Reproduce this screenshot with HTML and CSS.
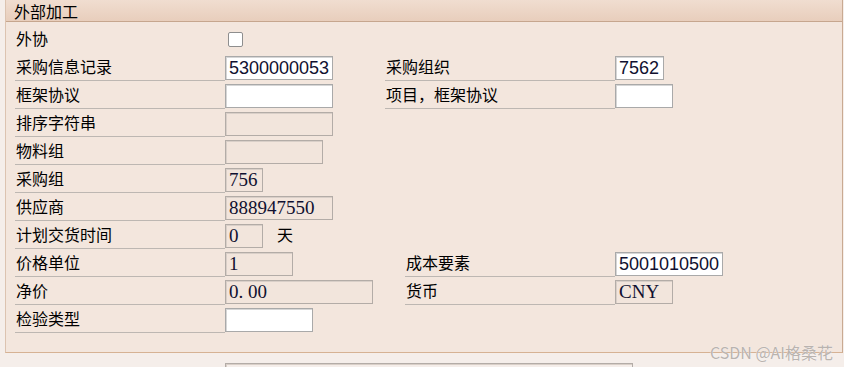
FILE: index.html
```html
<!DOCTYPE html>
<html lang="zh-CN">
<head>
  <meta charset="UTF-8">
  <title>外部加工</title>
  <link rel="stylesheet" href="styles.css">
</head>
<body>
  <div class="panel">
    <div class="panel-head">外部加工</div>
    <div class="panel-body">
      <div class="row">
        <div class="lbl none">外协</div>
        <div class="slot"><input type="checkbox" class="chk"></div>
      </div>
      <div class="row">
        <div class="lbl">采购信息记录</div>
        <div class="slot"><div class="fld w108">5300000053</div></div>
        <div class="lbl lbl2">采购组织</div>
        <div class="fld w49">7562</div>
      </div>
      <div class="row">
        <div class="lbl">框架协议</div>
        <div class="slot"><div class="fld w108"></div></div>
        <div class="lbl lbl2">项目，框架协议</div>
        <div class="fld w58"></div>
      </div>
      <div class="row">
        <div class="lbl">排序字符串</div>
        <div class="slot"><div class="fld ro w108"></div></div>
      </div>
      <div class="row">
        <div class="lbl">物料组</div>
        <div class="slot"><div class="fld ro w98"></div></div>
      </div>
      <div class="row">
        <div class="lbl">采购组</div>
        <div class="slot"><div class="fld ro w38">756</div></div>
      </div>
      <div class="row">
        <div class="lbl">供应商</div>
        <div class="slot"><div class="fld ro w108">888947550</div></div>
      </div>
      <div class="row">
        <div class="lbl">计划交货时间</div>
        <div class="slot"><div class="fld ro w38">0</div><span class="unit">天</span></div>
      </div>
      <div class="row">
        <div class="lbl">价格单位</div>
        <div class="slot"><div class="fld ro w68">1</div></div>
        <div class="lbl lbl2 indent">成本要素</div>
        <div class="fld w108">5001010500</div>
      </div>
      <div class="row">
        <div class="lbl">净价</div>
        <div class="slot"><div class="fld ro w148">0. 00</div></div>
        <div class="lbl lbl2 indent">货币</div>
        <div class="fld ro w58">CNY</div>
      </div>
      <div class="row">
        <div class="lbl">检验类型</div>
        <div class="slot"><div class="fld w88"></div></div>
      </div>
    </div>
  </div>

  <div class="after">
    <div class="fld ro wide"></div>
  </div>

  <div class="mark">CSDN @AI格桑花</div>
</body>
</html>
```

FILE: styles.css
```css
html {
  overflow: hidden;
}
body {
  margin: 0;
  background: #f5eeea;
  font-family: "Noto Sans CJK SC", sans-serif;
  font-size: 16px;
  color: #000;
  position: relative;
  height: 367px;
  overflow: hidden;
}
.panel {
  margin-left: 5px;
  width: 838px;
  box-sizing: border-box;
  background: #f3e6dd;
  border-left: 1px solid #dcc3b0;
  border-right: 1px solid #c9aa92;
  border-bottom: 1px solid #d6b294;
}
.panel-head {
  height: 22px;
  box-sizing: border-box;
  border-bottom: 1px solid #c6a68e;
  background: linear-gradient(#f0ddd0, #e8cebc);
  padding-left: 8px;
  line-height: 23px;
}
.panel-body {
  padding: 3px 0 19px 9px;
}
.row {
  display: flex;
  height: 28px;
  align-items: flex-end;
}
.lbl {
  width: 210px;
  height: 28px;
  box-sizing: border-box;
  border-bottom: 1px solid #bdb7b2;
  padding-left: 1px;
  line-height: 27px;
  white-space: nowrap;
}
.lbl.none {
  border-bottom-color: transparent;
}
.lbl2 {
  width: 230px;
}
.lbl2.indent {
  margin-left: 20px;
  width: 210px;
}
.slot {
  width: 160px;
  height: 28px;
  display: flex;
  align-items: flex-end;
}
.fld {
  height: 24px;
  margin-bottom: 1px;
  box-sizing: border-box;
  border: 1px solid #a9a9a9;
  box-shadow: inset 1px 1px 0 #d6d6d6;
  background: #fff;
  font-family: "Liberation Sans", sans-serif;
  font-size: 18px;
  line-height: 22px;
  padding-left: 3px;
  color: #101030;
  white-space: nowrap;
  overflow: hidden;
}
.fld.ro {
  background: #f2e5dc;
  border-color: #b3aca7;
  box-shadow: inset 1px 1px 0 #d9cfc8;
  font-family: "Liberation Serif", serif;
  font-size: 19px;
}
.w38 { width: 38px; }
.w49 { width: 49px; }
.w58 { width: 58px; }
.w68 { width: 68px; }
.w88 { width: 88px; }
.w98 { width: 98px; }
.w108 { width: 108px; }
.w148 { width: 148px; }
.chk {
  appearance: none;
  -webkit-appearance: none;
  width: 15px;
  height: 15px;
  margin: 0 0 6px 3px;
  box-sizing: border-box;
  border: 1px solid #8e8e8e;
  border-radius: 2px;
  background: #fff;
}
.unit {
  margin-left: 14px;
  line-height: 27px;
  align-self: flex-start;
}
.after {
  margin-top: 10px;
  padding-left: 225px;
  height: 4px;
  overflow: hidden;
}
.fld.wide {
  width: 408px;
  background: #f5eeea;
}
.mark {
  position: absolute;
  right: 11px;
  top: 340px;
  font-size: 16px;
  color: #b9b3af;
  text-shadow: 0 0 1px #fff;
}
```
